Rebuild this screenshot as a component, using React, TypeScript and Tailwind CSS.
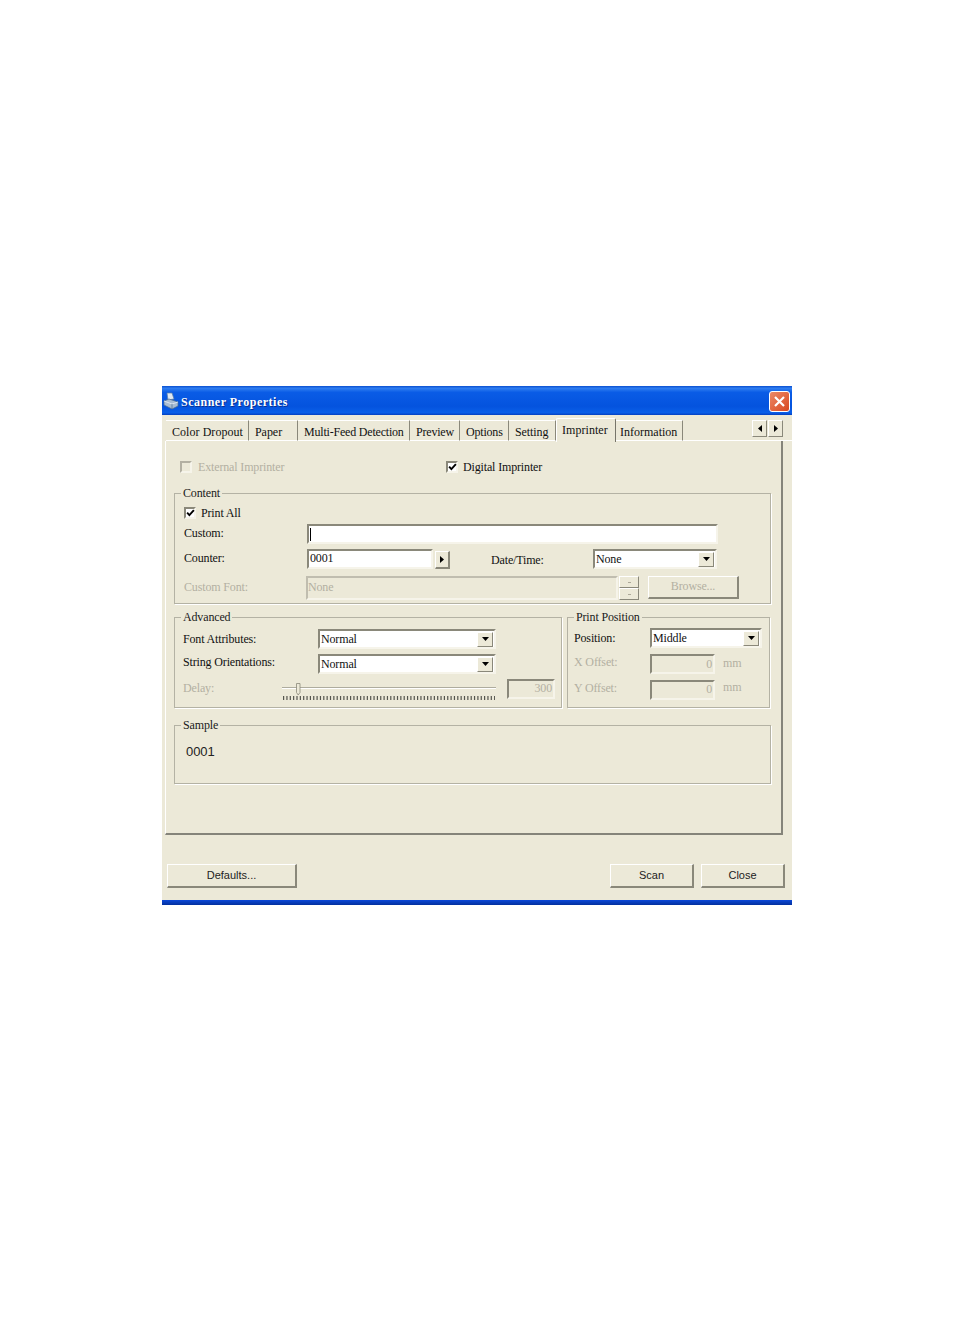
import type { ReactNode } from "react";

const sunken = "border-2 border-t-[#8a887a] border-l-[#8a887a] border-r-[#f6f4ea] border-b-[#f6f4ea]";
const raised = "border border-t-white border-l-white border-r-[#8a887a] border-b-[#8a887a]";
const muted = "text-[#b3b0a2]";

const tabs = [
  { label: "Color Dropout", width: "w-[83px]", track: "tracking-[0.05px]" },
  { label: "Paper", width: "w-[49px]", track: "tracking-[-0.05px]" },
  { label: "Multi-Feed Detection", width: "w-[112px]", track: "tracking-[-0.2px]" },
  { label: "Preview", width: "w-[50px]", track: "tracking-[-0.2px]" },
  { label: "Options", width: "w-[49px]", track: "tracking-[-0.2px]" },
  { label: "Setting", width: "w-[47px]", track: "tracking-[-0.1px]" },
];

function Arrow({ dir }: { dir: "down" | "left" | "right" }) {
  const points = dir === "down" ? "0,0 7,0 3.5,4" : dir === "left" ? "4,0 4,7 0,3.5" : "0,0 0,7 4,3.5";
  const size = dir === "down" ? "w-[7px] h-[4px]" : "w-[4px] h-[7px]";
  const box = dir === "down" ? "0 0 7 4" : "0 0 4 7";
  return (
    <svg viewBox={box} className={size}>
      <polygon points={points} fill="#000" />
    </svg>
  );
}

function ArrowButton({ dir, className }: { dir: "down" | "left" | "right"; className: string }) {
  return (
    <div className={`flex items-center justify-center bg-[#ece9d8] ${raised} ${className}`}>
      <Arrow dir={dir} />
    </div>
  );
}

function Check({ checked, disabled }: { checked?: boolean; disabled?: boolean }) {
  return (
    <div className={`w-[12px] h-[12px] shrink-0 flex items-center justify-center ${disabled ? "bg-[#ece9d8]" : "bg-white"} ${disabled ? "border-2 border-t-[#b3b0a2] border-l-[#b3b0a2] border-r-[#f6f4ea] border-b-[#f6f4ea]" : sunken}`}>
      {checked && (
        <svg viewBox="0 0 8 7" className="w-[9px] h-[8px] shrink-0">
          <path d="M1 3.2 L3 5.4 L7 1" fill="none" stroke="#000" strokeWidth="1.7" />
        </svg>
      )}
    </div>
  );
}

function Select({ value, className }: { value: string; className: string }) {
  return (
    <div className={`flex items-center justify-between bg-white ${sunken} ${className}`}>
      <span className="pl-[1px] leading-none">{value}</span>
      <ArrowButton dir="down" className="w-[16px] h-[15px] mr-[1px]" />
    </div>
  );
}

function Group({ title, className, children }: { title: string; className: string; children?: ReactNode }) {
  return (
    <div className={`relative border border-[#b4b2a4] shadow-[1px_1px_0_#fff] ${className}`}>
      <span className="absolute left-[6px] top-[-9px] bg-[#ece9d8] px-[2px] leading-[16px] text-[#1a1a1a]">{title}</span>
      {children}
    </div>
  );
}

function Button({ label, className }: { label: string; className: string }) {
  return (
    <div className={`flex items-center justify-center bg-[#ece9d8] ${raised} border-r-2 border-b-2 ${className}`}>
      {label}
    </div>
  );
}

function ScannerIcon() {
  return (
    <svg viewBox="0 0 16 18" className="w-[16px] h-[18px]">
      <path d="M4 1 L9 1 L11 7 L5 8 Z" fill="#dfe8f2" stroke="#5d7fa6" strokeWidth="0.7" />
      <path d="M1 9 L6 7 L15 10 L15 14 L9 17 L1 13 Z" fill="#a9bdd3" stroke="#4f6d8f" strokeWidth="0.7" />
      <path d="M1 9 L9 12 L15 10" fill="none" stroke="#e8eef5" strokeWidth="0.8" />
      <path d="M9 12 L9 17" stroke="#4f6d8f" strokeWidth="0.7" />
    </svg>
  );
}

export default function App() {
  return (
    <div className="w-[954px] h-[1336px] bg-white pt-[386px] pl-[162px] font-['Liberation_Serif',serif] text-[12px] tracking-[-0.15px] text-[#111]">
      <div className="w-[630px] h-[519px] bg-[#ece9d8] flex flex-col">
        {/* title bar */}
        <div className="h-[29px] shrink-0 flex items-center bg-[linear-gradient(180deg,#0a4fd0_0%,#2f7df0_8%,#0a5ce6_22%,#0453de_70%,#0a5fe8_92%,#0440c0_100%)]">
          <div className="ml-[1px] mt-[1px]"><ScannerIcon /></div>
          <span className="ml-[2px] mt-[2px] text-white font-bold text-[12px] tracking-[0.5px] [text-shadow:1px_1px_0_#0a2f90]">Scanner Properties</span>
          <div className="ml-auto mr-[2px] mt-[2px] w-[21px] h-[21px] rounded-[3px] border border-white bg-[linear-gradient(135deg,#ec8a68,#d8481f)] flex items-center justify-center">
            <svg viewBox="0 0 13 13" className="w-[13px] h-[13px]">
              <path d="M2 2 L11 11 M11 2 L2 11" stroke="#fff" strokeWidth="2.2" />
            </svg>
          </div>
        </div>

        {/* tab strip */}
        <div className="h-[26px] shrink-0 flex items-end pl-[3px] relative">
          <div className="flex items-end h-[21px] pl-[1px]">
            {tabs.map((t) => (
              <div key={t.label} className={`${t.width} h-[21px] flex items-center whitespace-nowrap pl-[6px] ${t.track} border-t border-t-white border-r border-r-[#8a887a] border-b border-b-white`}>
                <span className="relative top-[1px]">{t.label}</span>
              </div>
            ))}
            <div className="w-[60px] h-[24px] mb-[-1px] flex items-start pt-[2px] pl-[5px] tracking-[0.05px] border-t border-l border-white border-r border-r-[#77756a] rounded-t-[2px] bg-[#ece9d8] relative z-10">Imprinter</div>
            <div className="w-[67px] h-[21px] flex items-center pl-[4px] tracking-normal border-t border-t-white border-r border-r-[#8a887a] border-b border-b-white whitespace-nowrap">
              <span className="relative top-[1px]">Information</span>
            </div>
          </div>
          <div className="flex-1 h-[1px] bg-white" />
          <div className="absolute right-[9px] top-[5px] flex gap-[1px]">
            <ArrowButton dir="left" className="w-[15px] h-[17px]" />
            <ArrowButton dir="right" className="w-[15px] h-[17px]" />
          </div>
        </div>

        {/* tab page */}
        <div className="ml-[3px] w-[618px] h-[394px] shrink-0 border-l border-l-white border-r-2 border-r-[#85847a] border-b-2 border-b-[#85847a] pl-[8px] pr-[10px] pt-[19px]">
          <div className="flex items-center h-[14px] leading-none">
            <div className="ml-[6px]"><Check disabled /></div>
            <span className={`ml-[6px] w-[248px] ${muted}`}>External Imprinter</span>
            <Check checked />
            <span className="ml-[5px]">Digital Imprinter</span>
          </div>

          {/* Content */}
          <Group title="Content" className="mt-[19px] h-[111px] px-[9px] pt-[12px]">
            <div className="flex items-center h-[13px]">
              <Check checked />
              <span className="ml-[5px]">Print All</span>
            </div>
            <div className="flex items-center mt-[5px] h-[20px]">
              <span className="w-[123px] mb-[2px]">Custom:</span>
              <div className={`w-[411px] h-[20px] bg-white flex items-center pl-[1px] ${sunken}`}>
                <div className="w-[1px] h-[13px] bg-black" />
              </div>
            </div>
            <div className="flex items-center mt-[5px] h-[20px]">
              <span className="w-[123px] mb-[2px]">Counter:</span>
              <div className={`w-[126px] h-[20px] bg-white flex items-center pl-[1px] pb-[2px] leading-none ${sunken}`}>0001</div>
              <ArrowButton dir="right" className="ml-[2px] mt-[2px] w-[15px] h-[18px] border-r-2 border-b-2" />
              <span className="ml-[41px] w-[102px] relative top-[1px]">Date/Time:</span>
              <Select value="None" className="w-[124px] h-[20px]" />
            </div>
            <div className="flex items-center mt-[7px] h-[24px]">
              <span className={`w-[122px] mb-[2px] ${muted}`}>Custom Font:</span>
              <div className={`w-[312px] h-[24px] flex items-center pb-[2px] ${muted} ${sunken} border-t-[#c0bdaf] border-l-[#c0bdaf]`}>None</div>
              <div className="ml-[1px] w-[20px] h-[24px] flex flex-col">
                <div className={`h-[12px] flex items-center justify-center ${raised}`}><span className="w-[3px] h-[1px] bg-[#aca899]" /></div>
                <div className={`h-[12px] flex items-center justify-center ${raised}`}><span className="w-[3px] h-[1px] bg-[#aca899]" /></div>
              </div>
              <Button label="Browse..." className={`ml-[9px] mt-[-2px] pb-[2px] w-[91px] h-[23px] ${muted}`} />
            </div>
          </Group>

          <div className="flex mt-[13px] gap-[5px]">
            {/* Advanced */}
            <Group title="Advanced" className="w-[388px] h-[91px] pl-[8px] pt-[11px]">
              <div className="flex items-center h-[20px]">
                <span className="w-[135px]">Font Attributes:</span>
                <Select value="Normal" className="w-[178px] h-[20px]" />
              </div>
              <div className="flex items-center mt-[5px] h-[20px]">
                <span className="w-[135px] mb-[4px]">String Orientations:</span>
                <Select value="Normal" className="w-[178px] h-[20px]" />
              </div>
              <div className="flex mt-[5px] h-[21px] items-start">
                <span className={`w-[99px] ${muted}`}>Delay:</span>
                <div className="relative w-[214px] h-[21px]">
                  <div className="mt-[8px] h-[2px] bg-[#aeac9e] border-b border-b-white" />
                  <svg viewBox="0 0 5 13" className="absolute left-[14px] top-[4px] w-[5px] h-[13px]">
                    <path d="M0.5 0.5 H4 V9.5 L2.2 12 L0.5 9.5 Z" fill="#ece9d8" stroke="#8a887a" strokeWidth="0.8" />
                  </svg>
                  <svg viewBox="0 0 212 4" className="absolute left-[1px] top-[17px] w-[212px] h-[4px]">
                    {Array.from({ length: 64 }, (_, i) => (
                      <rect key={i} x={i * 3.35} y={0} width={1.2} height={4} fill="#55554e" />
                    ))}
                  </svg>
                </div>
                <div className={`ml-[11px] w-[48px] h-[20px] flex items-center justify-end pr-[1px] pb-[2px] leading-none ${muted} ${sunken}`}>300</div>
              </div>
            </Group>

            {/* Print Position */}
            <Group title="Print Position" className="w-[203px] h-[91px] pl-[6px] pt-[10px]">
              <div className="flex items-center h-[20px]">
                <span className="w-[76px]">Position:</span>
                <Select value="Middle" className="w-[112px] h-[20px]" />
              </div>
              <div className="flex items-center mt-[5px] h-[21px]">
                <span className={`w-[76px] mb-[4px] ${muted}`}>X Offset:</span>
                <div className={`w-[65px] h-[20px] flex items-center justify-end pr-[1px] leading-none ${muted} ${sunken}`}>0</div>
                <span className={`ml-[8px] mb-[2px] ${muted}`}>mm</span>
              </div>
              <div className="flex items-center mt-[5px] h-[21px]">
                <span className={`w-[76px] mb-[4px] ${muted}`}>Y Offset:</span>
                <div className={`w-[65px] h-[20px] flex items-center justify-end pr-[1px] pb-[2px] leading-none ${muted} ${sunken}`}>0</div>
                <span className={`ml-[8px] mb-[6px] ${muted}`}>mm</span>
              </div>
            </Group>
          </div>

          {/* Sample */}
          <Group title="Sample" className="mt-[17px] h-[59px] pl-[11px] pt-[19px]">
            <span className="font-['Liberation_Sans',sans-serif] text-[13px] tracking-[-0.1px] leading-none text-[#222] block">0001</span>
          </Group>
        </div>

        {/* footer buttons */}
        <div className="flex-1 flex items-start pt-[29px] pl-[5px] pr-[7px] font-['Liberation_Sans',sans-serif] text-[11px] tracking-normal text-[#222]">
          <Button label="Defaults..." className="w-[130px] h-[24px]" />
          <Button label="Scan" className="ml-auto w-[84px] h-[24px]" />
          <Button label="Close" className="ml-[7px] w-[84px] h-[24px]" />
        </div>
        <div className="h-[5px] shrink-0 bg-[linear-gradient(180deg,#0c48d8,#03309e)]" />
      </div>
    </div>
  );
}
